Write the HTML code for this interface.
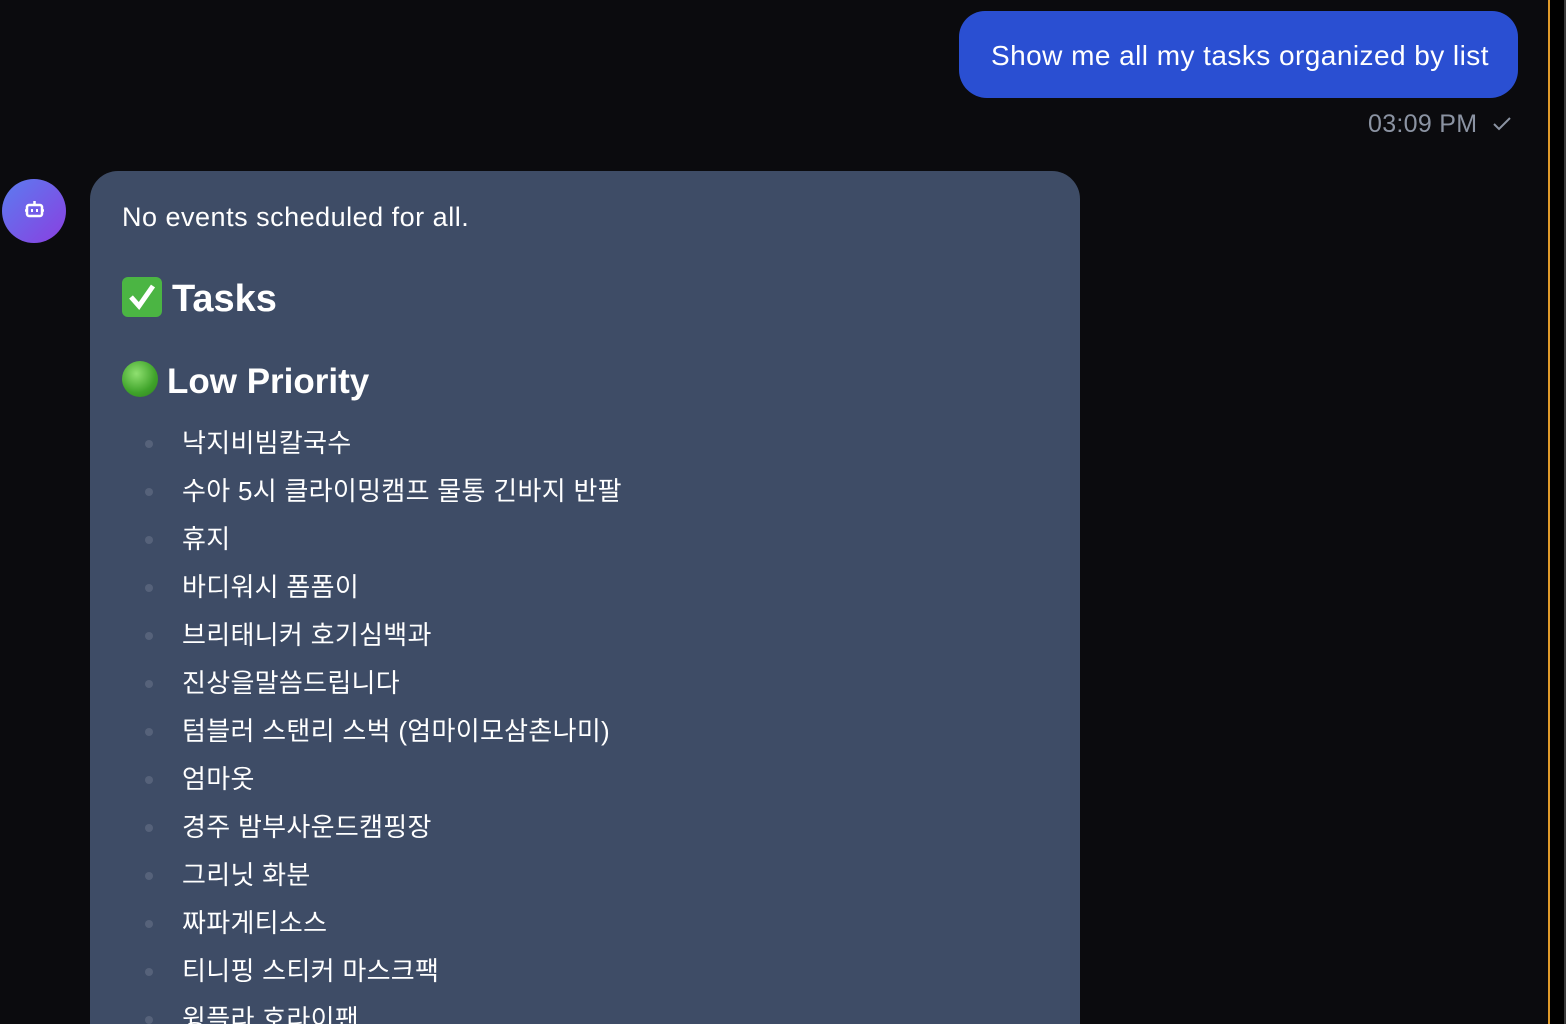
<!DOCTYPE html>
<html><head><meta charset="utf-8"><style>
*{margin:0;padding:0;box-sizing:border-box}
html{width:1566px;height:1024px;overflow:hidden}
body{width:1566px;height:1024px;overflow:hidden;background:#0b0b0e;font-family:"Liberation Sans","Noto Sans CJK KR",sans-serif;position:relative;color:#fff}
.rb{position:absolute;left:1548px;top:0;width:2px;height:1024px;background:#e09a2a}
.bk{position:absolute;left:1550px;top:0;width:14px;height:1024px;background:#000}
.gr{position:absolute;left:1564px;top:0;width:2px;height:1024px;background:#3a3a3a}
.ub{position:absolute;left:959px;top:11px;width:559px;height:87px;background:#2a4fd2;border-radius:26px 26px 28px 28px;font-size:28px;line-height:89px;padding-left:32px;letter-spacing:0.45px}
.ts{position:absolute;left:1368px;top:110px;font-size:25px;color:#8b93a2;letter-spacing:0.3px}
.av{position:absolute;left:2px;top:179px;width:64px;height:64px;border-radius:50%;background:linear-gradient(135deg,#5b7cf0,#8a3fe0)}
.bb{position:absolute;left:90px;top:171px;width:990px;height:853px;background:#3e4c66;border-radius:28px 28px 0 0}
.t1{position:absolute;left:122px;top:202px;font-size:27px;letter-spacing:0.5px}
.h1{position:absolute;left:122px;top:277px;font-size:38px;font-weight:bold}
.h2{position:absolute;left:122px;top:361px;font-size:35px;font-weight:bold}
.chk{display:inline-block;width:40px;height:40px;background:#4bb543;border-radius:6px;vertical-align:-6px;margin-right:10px;position:relative}
.dot{display:inline-block;width:36px;height:36px;border-radius:50%;background:radial-gradient(circle at 40% 35%,#8fe070,#3fa32a 60%,#2f7e20);vertical-align:-4px;margin-right:9px}
ul{position:absolute;left:145px;top:419px;list-style:none;font-size:26px;letter-spacing:0.3px}
li{height:48px;line-height:48px;position:relative;padding-left:37px}
li:before{content:"";position:absolute;left:0;top:21px;width:8px;height:8px;border-radius:50%;background:#56627a}
</style></head><body>
<div class="rb"></div><div class="bk"></div><div class="gr"></div>
<div class="ub">Show me all my tasks organized by list</div>
<div class="ts">03:09 PM <svg width="22" height="18" viewBox="0 0 22 18" style="vertical-align:-1px;margin-left:6px"><path d="M3 9l5 5L19 3" stroke="#8b93a2" stroke-width="2" fill="none"/></svg></div>
<div class="av"><svg width="64" height="64" viewBox="0 0 64 64"><g stroke="#fff" stroke-width="2.5" fill="none"><rect x="25" y="26" width="15" height="11" rx="2"/><path d="M32.5 22v4M23 31.5h2M40 31.5h2"/></g><rect x="29" y="30" width="2" height="3" fill="#fff"/><rect x="34" y="30" width="2" height="3" fill="#fff"/></svg></div>
<div class="bb"></div>
<div class="t1">No events scheduled for all.</div>
<div class="h1"><span class="chk"><svg width="40" height="40" viewBox="0 0 40 40" style="position:absolute;left:0;top:0"><path d="M9 20l8 9L31 9" stroke="#fff" stroke-width="5" fill="none"/></svg></span>Tasks</div>
<div class="h2"><span class="dot"></span>Low Priority</div>
<ul>
<li>낙지비빔칼국수</li>
<li>수아 5시 클라이밍캠프 물통 긴바지 반팔</li>
<li>휴지</li>
<li>바디워시 폼폼이</li>
<li>브리태니커 호기심백과</li>
<li>진상을말씀드립니다</li>
<li>텀블러 스탠리 스벅 (엄마이모삼촌나미)</li>
<li>엄마옷</li>
<li>경주 밤부사운드캠핑장</li>
<li>그리닛 화분</li>
<li>짜파게티소스</li>
<li>티니핑 스티커 마스크팩</li>
<li>윙플라 호라이팬</li>
</ul>
</body></html>
